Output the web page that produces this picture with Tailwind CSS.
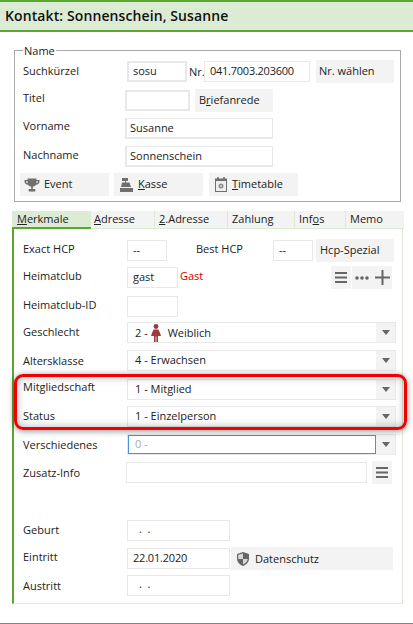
<!DOCTYPE html>
<html lang="de"><head><meta charset="utf-8">
<script src="https://cdn.jsdelivr.net/npm/@tailwindcss/browser@4"></script>
<title>Kontakt</title></head>
<body class="bg-white">
<div class="relative w-[413px] h-[624px] overflow-hidden bg-white font-['Open_Sans',sans-serif] text-[11px] leading-[16px] text-[#222]">
  <header class="h-[32px] bg-[#dcebd4] border-t-2 border-b-2 border-[#5aa832] pl-[5px] flex items-center">
    <h1 class="text-[14px] font-semibold text-[#111] tracking-[0.1px] pb-[1px]">Kontakt: Sonnenschein, Susanne</h1>
  </header>

  <section class="relative ml-[14px] mt-[18px] w-[387px] h-[152px] border border-[#a8a8a8] pl-[8px]">
    <span class="absolute left-[8px] -top-[8px] bg-white px-[1px]">Name</span>
    <div class="flex items-center h-[23px] mt-[9px]">
      <span class="w-[104px] pb-[1px]">Suchkürzel</span>
      <div class="w-[60px] h-[21px] border-2 border-[#e8e8e8] pl-[4px] leading-[15px]">sosu</div>
      <span class="ml-[2px] w-[15px]">Nr.</span>
      <div class="w-[106px] h-[21px] border border-[#e8e8e8] pl-[5px] leading-[17px] tracking-[-0.25px]">041.7003.203600</div>
      <div class="ml-[6px] w-[78px] h-[23px] bg-[#f3f3f3] pl-[3px] leading-[21px]">Nr. wählen</div>
    </div>
    <div class="flex items-center h-[23px] mt-[6px]">
      <span class="w-[102px] pb-[5px]">Titel</span>
      <div class="w-[65px] h-[21px] border-2 border-[#e8e8e8]"></div>
      <div class="ml-[5px] w-[78px] h-[23px] bg-[#f3f3f3] pl-[4px] leading-[22px]">B<span class="underline">r</span>iefanrede</div>
    </div>
    <div class="flex items-center h-[21px] mt-[6px]">
      <span class="w-[102px] pb-[6px]">Vorname</span>
      <div class="w-[148px] h-[21px] border-2 border-[#e8e8e8] border-t border-r pl-[3px] leading-[17px]">Susanne</div>
    </div>
    <div class="flex items-center h-[21px] mt-[7px]">
      <span class="w-[102px] pb-[4px]">Nachname</span>
      <div class="w-[148px] h-[21px] border-2 border-[#e8e8e8] border-t border-r pl-[3px] leading-[17px]">Sonnenschein</div>
    </div>
    <div class="flex items-center gap-[5px] -ml-[3px] mt-[6px]">
      <div class="w-[89px] h-[23px] bg-[#f3f3f3] flex items-center pl-[4px] gap-[4px]">
        <svg width="16" height="16" viewBox="0 0 16 16" class="shrink-0" fill="#6f6f6f"><path d="M3.500 1.500h9v1.500h3v1.500c0 2-1.500 3-3.500 3.300C11.300 9 10 9.500 8.800 9.800V12h2.500v2.500H4.700V12h2.500V9.800C6 9.500 4.700 9 4 7.800 2 7.500.5 6.500.5 4.500V3h3zM2 4.300c0 1 .6 1.700 1.700 2L3.500 4.300zm12 0h-1.500l-.2 2c1.100-.3 1.700-1 1.700-2z"/></svg>
        <span class="pb-[2px]">Event</span>
      </div>
      <div class="w-[89px] h-[23px] bg-[#f3f3f3] flex items-center pl-[6px] gap-[5px]">
        <svg width="13" height="14" viewBox="0 0 13 14" class="shrink-0" fill="#6f6f6f"><path d="M2 0h6v3H6v1.500h3.500L11 9H1l1-4.500h3V3H2zM2 6h1v1H2zm2 0h1v1H4zm2 0h1v1H6zM2.500 8h6v.5h-6zM0 10h13v4H0z"/></svg>
        <span class="pb-[2px]"><span class="underline">K</span>asse</span>
      </div>
      <div class="ml-[1px] w-[89px] h-[23px] bg-[#f3f3f3] flex items-center pl-[6px] gap-[5px]">
        <svg width="12" height="15" viewBox="0 0 12 15" class="shrink-0"><path d="M3 0v3M9 0v3" stroke="#6f6f6f" stroke-width="1.500"/><rect x=".5" y="2" width="11" height="12.500" fill="#eee" stroke="#6f6f6f"/><rect x="0" y="2" width="12" height="2" fill="#6f6f6f"/><circle cx="6" cy="9" r="2.500" fill="#8a8a8a"/><circle cx="6" cy="9" r="1" fill="#ddd"/></svg>
        <span class="pb-[2px]"><span class="underline">T</span>imetable</span>
      </div>
    </div>
  </section>

  <nav class="flex ml-[12px] mt-[9px] w-[392px] h-[18px] bg-[#f3f3f3]">
    <div class="w-[79px] pl-[5px] bg-[#dcebd4] border-b-2 border-[#5aa832]"><span class="underline">M</span>erkmale</div>
    <div class="w-[64px] pl-[3px] border-r border-b border-[#dcebd4]"><span class="underline">A</span>dresse</div>
    <div class="w-[73px] pl-[4px] border-r border-b border-[#dcebd4]"><span class="underline">2</span>.Adresse</div>
    <div class="w-[67px] pl-[4px] border-r border-b border-[#dcebd4]">Zahlung</div>
    <div class="w-[51px] pl-[4px] border-r border-b border-[#dcebd4]">Inf<span class="underline">o</span>s</div>
    <div class="w-[58px] pl-[4px] border-b border-[#dcebd4]">Memo</div>
  </nav>

  <main class="ml-[12px] w-[391px] h-[375px] border border-l-2 border-t-0 border-[#dcebd4] border-l-[#5aa832] pl-[9px] pt-[10px]">
    <div class="flex items-center h-[23px]">
      <span class="w-[104px] pb-[4px]">Exact HCP</span>
      <div class="w-[40px] h-[21px] border border-[#e8e8e8] pl-[5px] leading-[17px]">--</div>
      <span class="ml-[29px] w-[77px] pb-[4px]">Best HCP</span>
      <div class="w-[40px] h-[21px] border border-[#e8e8e8] pl-[5px] leading-[17px]">--</div>
      <div class="ml-[3px] w-[78px] h-[23px] bg-[#f3f3f3] pl-[4px] leading-[21px]">Hcp-Spezial</div>
    </div>
    <div class="flex items-center h-[23px] mt-[4px]">
      <span class="w-[104px] pb-[3px]">Heimatclub</span>
      <div class="w-[51px] h-[21px] border border-[#e8e8e8] pl-[5px] leading-[17px]">gast</div>
      <span class="ml-[2px] w-[151px] text-[#cc0000] pb-[3px]">Gast</span>
      <div class="w-[20px] h-[23px] bg-[#f3f3f3] flex items-center justify-center">
        <svg width="12" height="11" viewBox="0 0 12 11" fill="#666"><path d="M0 0h12v2H0zM0 4.500h12v2H0zM0 9h12v2H0z"/></svg>
      </div>
      <div class="ml-[1px] w-[40px] h-[23px] bg-[#f3f3f3] flex items-center pl-[3px] gap-[6px]">
        <svg width="14" height="4" viewBox="0 0 14 4" fill="#666"><circle cx="2" cy="2" r="1.800"/><circle cx="7" cy="2" r="1.800"/><circle cx="12" cy="2" r="1.800"/></svg>
        <svg width="15" height="15" viewBox="0 0 15 15" fill="#666"><path d="M6.500 0h2v6.500H15v2H8.500V15h-2V8.500H0v-2h6.500z"/></svg>
      </div>
    </div>
    <div class="flex items-center h-[21px] mt-[7px]">
      <span class="w-[104px] pb-[4px]">Heimatclub-ID</span>
      <div class="w-[51px] h-[21px] border border-[#e8e8e8]"></div>
    </div>
    <div class="flex items-center h-[21px] mt-[5px]">
      <span class="w-[104px] pb-[1px]">Geschlecht</span>
      <div class="w-[269px] h-[21px] border border-[#e8e8e8] flex">
        <div class="flex-1 pl-[7px] flex items-center gap-[2px]">
          <span>2 -</span>
          <svg width="12" height="18" viewBox="0 0 12 18" fill="#9a3c3c"><circle cx="6" cy="2.500" r="2.400"/><path d="M3.500 5.500h5L10 9l1 3H8v6H6.400v-5.500h-.8V18H4v-6H1l1-3z"/></svg>
          <span class="ml-[4px]">Weiblich</span>
        </div>
        <div class="w-[19px] bg-[#f3f3f3] flex items-center justify-center"><span class="block w-0 h-0 border-x-[4.500px] border-x-transparent border-t-[5px] border-t-[#666]"></span></div>
      </div>
    </div>
    <div class="flex items-center h-[21px] mt-[7px]">
      <span class="w-[104px]">Altersklasse</span>
      <div class="w-[269px] h-[21px] border border-[#e8e8e8] flex">
        <div class="flex-1 pl-[7px] leading-[17px]">4 - Erwachsen</div>
        <div class="w-[19px] bg-[#f3f3f3] flex items-center justify-center"><span class="block w-0 h-0 border-x-[4.500px] border-x-transparent border-t-[5px] border-t-[#666]"></span></div>
      </div>
    </div>
    <div class="flex items-center h-[21px] mt-[8px]">
      <span class="w-[104px] pb-[5px]">Mitgliedschaft</span>
      <div class="w-[269px] h-[21px] border border-[#e8e8e8] flex">
        <div class="flex-1 pl-[7px] leading-[17px]">1 - Mitglied</div>
        <div class="w-[19px] bg-[#f3f3f3] flex items-center justify-center"><span class="block w-0 h-0 border-x-[4.500px] border-x-transparent border-t-[5px] border-t-[#666]"></span></div>
      </div>
    </div>
    <div class="flex items-center h-[21px] mt-[6px]">
      <span class="w-[104px] pb-[2px]">Status</span>
      <div class="w-[269px] h-[21px] border border-[#e8e8e8] flex">
        <div class="flex-1 pl-[7px] leading-[17px]">1 - Einzelperson</div>
        <div class="w-[19px] bg-[#f3f3f3] flex items-center justify-center"><span class="block w-0 h-0 border-x-[4.500px] border-x-transparent border-t-[5px] border-t-[#666]"></span></div>
      </div>
    </div>
    <div class="flex items-center h-[21px] mt-[7px]">
      <span class="w-[104px] pt-[1px]">Verschiedenes</span>
      <div class="w-[269px] h-[21px] border border-[#e8e8e8] flex">
        <div class="flex-1 border border-[#4d90e0] pl-[6px] leading-[15px] text-[#aaa]">0 -</div>
        <div class="w-[19px] bg-[#f3f3f3] flex items-center justify-center"><span class="block w-0 h-0 border-x-[4.500px] border-x-transparent border-t-[5px] border-t-[#666]"></span></div>
      </div>
    </div>
    <div class="flex items-center h-[23px] mt-[6px]">
      <span class="w-[103px] pt-[1px]">Zusatz-Info</span>
      <div class="w-[241px] h-[21px] border border-[#e8e8e8]"></div>
      <div class="ml-[5px] w-[20px] h-[23px] bg-[#f3f3f3] flex items-center justify-center">
        <svg width="12" height="11" viewBox="0 0 12 11" fill="#666"><path d="M0 0h12v2H0zM0 4.500h12v2H0zM0 9h12v2H0z"/></svg>
      </div>
    </div>
    <div class="flex items-center h-[21px] mt-[36px]">
      <span class="w-[104px] pb-[2px]">Geburt</span>
      <div class="w-[103px] h-[21px] border border-[#e8e8e8] pl-[11px] leading-[15px]">.&nbsp;&nbsp;.</div>
    </div>
    <div class="flex items-center h-[23px] mt-[6px]">
      <span class="w-[104px] pb-[4px]">Eintritt</span>
      <div class="w-[103px] h-[21px] border border-[#e8e8e8] pl-[5px] leading-[17px] tracking-[-0.2px]">22.01.2020</div>
      <div class="ml-[1px] w-[162px] h-[23px] bg-[#f3f3f3] flex items-center pl-[6px] gap-[6px]">
        <svg width="12" height="14" viewBox="0 0 12 14" class="shrink-0"><path d="M6 0l6 2v4.500c0 3.500-2.500 6-6 7.500-3.500-1.500-6-4-6-7.500V2z" fill="#666"/><path d="M6 1.500v5.500h4.800c-.4 2.500-2.300 4.300-4.800 5.500V7H1.200V2.800z" fill="#d8d8d8"/></svg>
        <span>Datenschutz</span>
      </div>
    </div>
    <div class="flex items-center h-[21px] mt-[5px]">
      <span class="w-[104px]">Austritt</span>
      <div class="w-[103px] h-[21px] border border-[#e8e8e8] pl-[11px] leading-[15px]">.&nbsp;&nbsp;.</div>
    </div>
  </main>

  <div class="absolute left-[14px] top-[374px] w-[393px] h-[56px] border-[3px] border-[#f00000] rounded-[9px] shadow-[0_1px_6px_rgba(0,0,0,0.45),inset_0_0_8px_rgba(0,0,0,0.3)]"></div>
  <div class="absolute left-0 bottom-0 w-full h-px bg-[#5aa832]"></div>
</div>
</body></html>
